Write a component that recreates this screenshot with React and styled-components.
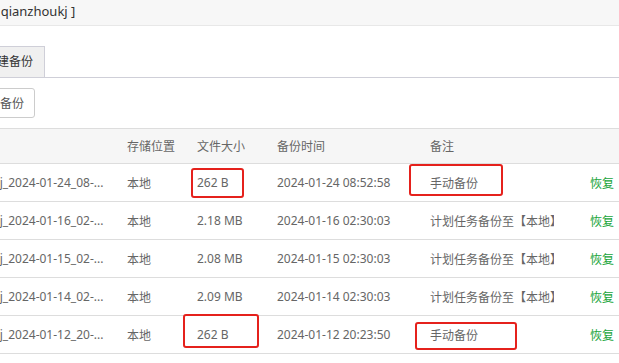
import React from "react";
import styled, { createGlobalStyle } from "styled-components";

const GlobalStyle = createGlobalStyle`
  * {
    box-sizing: border-box;
  }
  html, body {
    margin: 0;
    padding: 0;
    background: #fff;
  }
  body {
    font-family: "Noto Sans", "Noto Sans CJK SC", sans-serif;
    font-size: 12px;
    color: #666;
  }
`;

// 화면 밖으로 잘린 패널 왼쪽 부분을 흉내냅니다.
const Viewport = styled.div`
  width: 619px;
  height: 363px;
  overflow: hidden;
`;

const Panel = styled.div`
  width: 689px;
  margin-left: -70px;
`;

const TitleBar = styled.div`
  height: 26px;
  background: #f7f7f7;
  border-bottom: 1px solid #e8e8e8;
  padding-left: 24px;
  font-size: 13px;
  line-height: 22px;
  color: #333;
  white-space: nowrap;
`;

const TabBar = styled.div`
  display: flex;
  margin-top: 20px;
  padding-left: 42px;
  border-bottom: 1px solid #cfcfd8;
`;

const Tab = styled.div`
  height: 32px;
  padding: 0 11px 0 12px;
  margin-bottom: -1px;
  border: 1px solid #cfcfd8;
  background: #f0f0f0;
  color: #333;
  line-height: 30px;
  font-size: 12px;
`;

const Toolbar = styled.div`
  padding: 10px 0 10px 35px;
`;

const Button = styled.button`
  height: 30px;
  padding: 0 10px;
  border: 1px solid #ccc;
  border-radius: 3px;
  background: #fff;
  color: #555;
  font-family: inherit;
  font-size: 12px;
`;

const Table = styled.div`
  border-top: 1px solid #ddd;
`;

const COLUMNS = "186px 70px 80px 153px 124px 1fr";

const HeadRow = styled.div`
  display: grid;
  grid-template-columns: ${COLUMNS};
  align-items: center;
  height: 35px;
  padding: 0 5px 0 11px;
  background: #f6f6f6;
  border-bottom: 1px solid #ddd;
`;

const Row = styled.div`
  position: relative;
  display: grid;
  grid-template-columns: ${COLUMNS};
  align-items: center;
  height: 38px;
  padding: 0 5px 0 11px;
  border-bottom: 1px solid #ddd;
`;

const Cell = styled.div`
  white-space: nowrap;
  overflow: hidden;
  color: #666;
  text-align: ${(p) => (p.$right ? "right" : "left")};
`;

const Action = styled.a`
  color: #20a53a;
  text-decoration: none;
`;

// 스크린샷 위에 그려진 빨간 표시 상자
const Mark = styled.span`
  position: absolute;
  left: ${(p) => p.$x}px;
  top: ${(p) => p.$y}px;
  width: ${(p) => p.$w}px;
  height: ${(p) => p.$h}px;
  border: 2.5px solid #e5211c;
  border-radius: 3px;
  pointer-events: none;
`;

const rows = [
  {
    name: "qianzhoukj_2024-01-24_08-...",
    size: "262 B",
    time: "2024-01-24 08:52:58",
    note: "手动备份",
    marks: [
      { x: 261, y: 4, w: 53, h: 30 },
      { x: 479, y: 0, w: 94, h: 32 },
    ],
  },
  {
    name: "qianzhoukj_2024-01-16_02-...",
    size: "2.18 MB",
    time: "2024-01-16 02:30:03",
    note: "计划任务备份至【本地】",
  },
  {
    name: "qianzhoukj_2024-01-15_02-...",
    size: "2.08 MB",
    time: "2024-01-15 02:30:03",
    note: "计划任务备份至【本地】",
  },
  {
    name: "qianzhoukj_2024-01-14_02-...",
    size: "2.09 MB",
    time: "2024-01-14 02:30:03",
    note: "计划任务备份至【本地】",
  },
  {
    name: "qianzhoukj_2024-01-12_20-...",
    size: "262 B",
    time: "2024-01-12 20:23:50",
    note: "手动备份",
    marks: [
      { x: 253, y: -2, w: 76, h: 34 },
      { x: 485, y: 6, w: 102, h: 28 },
    ],
  },
];

export default function App() {
  return (
    <>
      <GlobalStyle />
      <Viewport>
        <Panel>
          <TitleBar>数据库[ qianzhoukj ]</TitleBar>
          <TabBar>
            <Tab>创建备份</Tab>
          </TabBar>
          <Toolbar>
            <Button>立即备份</Button>
          </Toolbar>
          <Table>
            <HeadRow>
              <Cell>文件名称</Cell>
              <Cell>存储位置</Cell>
              <Cell>文件大小</Cell>
              <Cell>备份时间</Cell>
              <Cell>备注</Cell>
              <Cell $right></Cell>
            </HeadRow>
            {rows.map((r) => (
              <Row key={r.time}>
                <Cell>{r.name}</Cell>
                <Cell>本地</Cell>
                <Cell>{r.size}</Cell>
                <Cell>{r.time}</Cell>
                <Cell>{r.note}</Cell>
                <Cell $right>
                  <Action href="#">恢复</Action>
                </Cell>
                {(r.marks || []).map((m, i) => (
                  <Mark key={i} $x={m.x} $y={m.y} $w={m.w} $h={m.h} />
                ))}
              </Row>
            ))}
          </Table>
        </Panel>
      </Viewport>
    </>
  );
}
